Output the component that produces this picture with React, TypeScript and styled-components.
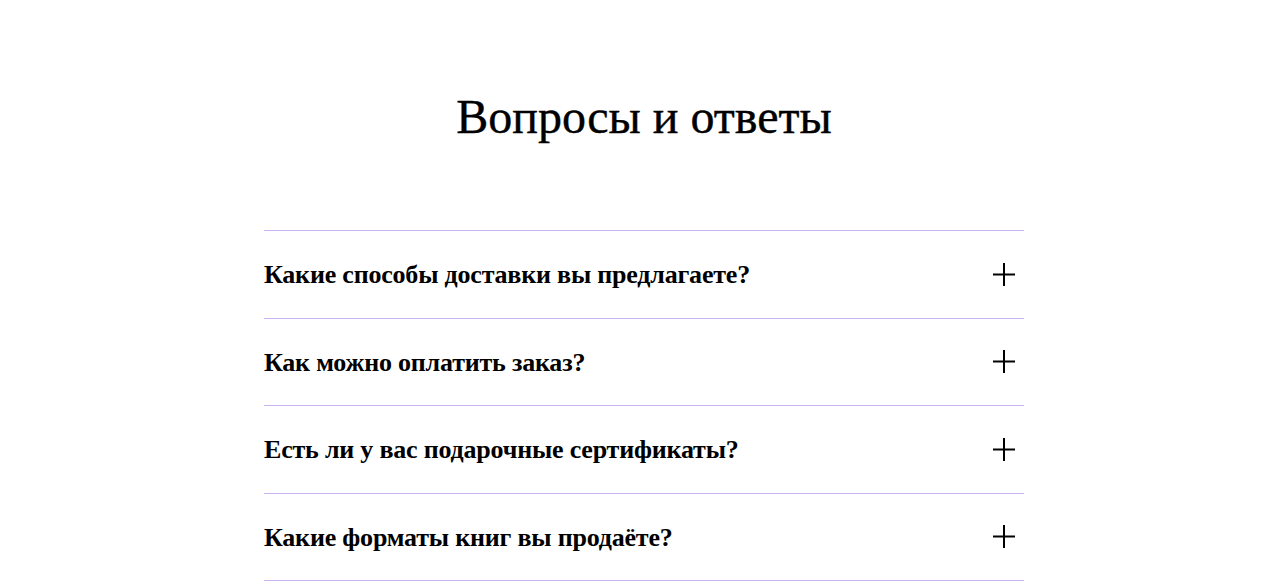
import React from 'react'
import styled, { createGlobalStyle } from 'styled-components'

const GlobalStyle = createGlobalStyle`
  * { box-sizing: border-box; }
  body {
    margin: 0;
    background: #ffffff;
    font-family: "Liberation Serif", "DejaVu Serif", serif;
    color: #000000;
  }
`

const Section = styled.section`
  padding: 82px 0 0 15px;
`

const Title = styled.h2`
  margin: 0 0 78px;
  text-align: center;
  font-size: 48px;
  font-weight: 400;
  line-height: 70px;
  -webkit-text-stroke: 0.4px #000;
`

const List = styled.div`
  width: 760px;
  margin: 0 auto;
  border-top: 1px solid #cbb3f3;
`

const Row = styled.div`
  display: flex;
  align-items: center;
  justify-content: space-between;
  height: 87.5px;
  border-bottom: 1px solid #cbb3f3;
  cursor: pointer;
`

const Question = styled.h3`
  margin: 0;
  font-size: 26px;
  font-weight: 700;
  letter-spacing: -0.2px;
  padding-top: 2px;
`

const PlusIcon = () => (
  <svg width="22" height="23" viewBox="0 0 22 23" style={{ marginRight: 9 }}>
    <path d="M11 0V23M0 11.5H22" stroke="#000" strokeWidth="2" fill="none" />
  </svg>
)

const questions = [
  'Какие способы доставки вы предлагаете?',
  'Как можно оплатить заказ?',
  'Есть ли у вас подарочные сертификаты?',
  'Какие форматы книг вы продаёте?',
]

const App = () => {
  return (
    <>
      <GlobalStyle />
      <Section>
        <Title>Вопросы и ответы</Title>
        <List>
          {questions.map((q) => (
            <Row key={q}>
              <Question>{q}</Question>
              <PlusIcon />
            </Row>
          ))}
        </List>
      </Section>
    </>
  )
}

export default App
